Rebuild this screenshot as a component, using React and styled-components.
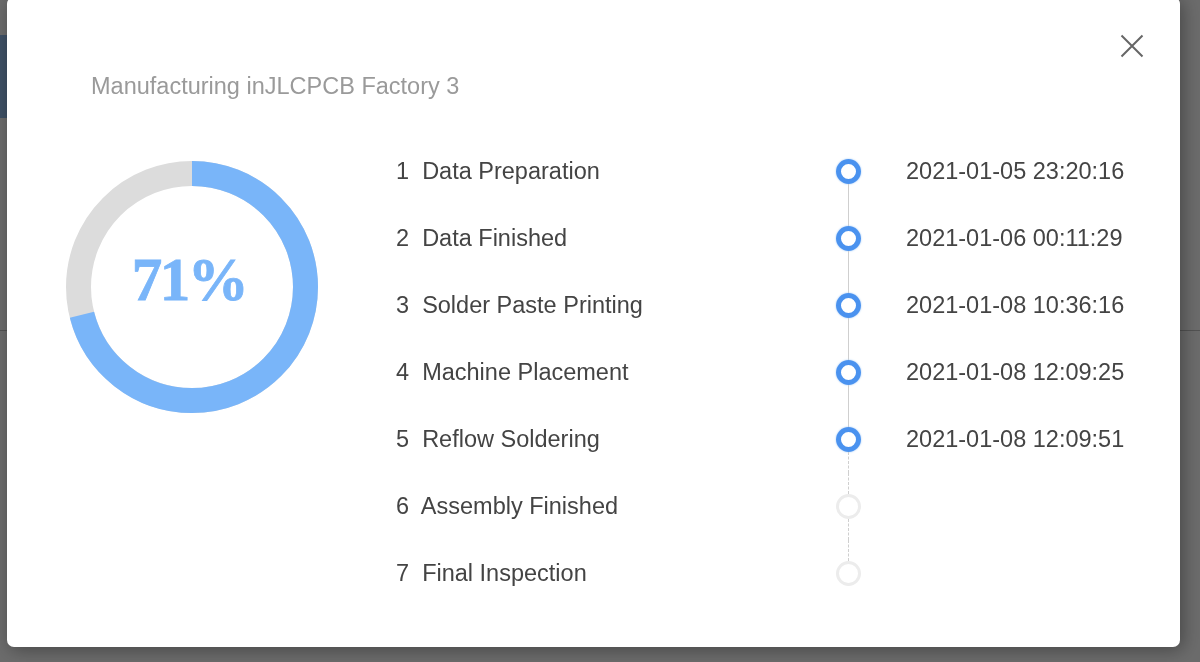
import styled, { createGlobalStyle } from "styled-components";

const GlobalStyle = createGlobalStyle`
  html, body {
    margin: 0;
    padding: 0;
    background: #ffffff;
    overflow: hidden;
    font-family: "Liberation Sans", Arial, sans-serif;
  }
`;

const Page = styled.div`
  width: 1200px;
  height: 662px;
  padding-top: 35px;
  box-sizing: border-box;
`;

const Banner = styled.div`
  width: 240px;
  height: 83px;
  background: #94bff0;
`;

const Rule = styled.div`
  margin-top: 212px;
  height: 1px;
  background: #c4c4c4;
`;

const Backdrop = styled.div`
  position: fixed;
  inset: 0;
  background: rgba(0, 0, 0, 0.58);
`;

const Modal = styled.div`
  position: fixed;
  left: 7px;
  top: -3px;
  width: 1173px;
  height: 650px;
  background: #ffffff;
  border-radius: 7px;
  box-shadow: 3px 3px 18px rgba(0, 0, 0, 0.35);
  box-sizing: border-box;
  padding: 77px 0 0 0;
`;

const Close = styled.button`
  position: absolute;
  top: 37px;
  right: 36px;
  width: 24px;
  height: 24px;
  padding: 0;
  border: none;
  background: none;
  cursor: pointer;
  color: #666;
`;

const Title = styled.h3`
  margin: 0 0 0 84px;
  font-size: 23.5px;
  line-height: 24px;
  font-weight: 400;
  color: #9a9a9a;
`;

const Body = styled.div`
  display: flex;
  margin-top: 40px;
  padding-left: 59px;
`;

const Donut = styled.div`
  display: grid;
  width: 252px;
  height: 252px;
  margin-top: 23px;
  margin-right: 78px;
  flex-shrink: 0;

  & > * {
    grid-area: 1 / 1;
  }
`;

const Percent = styled.div`
  align-self: center;
  justify-self: center;
  margin: -14px 6px 0 0;
  font-family: "Liberation Serif", "Times New Roman", serif;
  font-weight: 700;
  font-size: 61px;
  letter-spacing: -2.5px;
  color: #79b5f9;
  -webkit-text-stroke: 0.8px #79b5f9;
`;

const Steps = styled.ol`
  list-style: none;
  margin: 0;
  padding: 0;
`;

const Step = styled.li`
  display: grid;
  grid-template-columns: 440px 24px auto;
  height: 67px;
  align-items: center;
  font-size: 23.5px;
  color: #444;
`;

const Label = styled.span`
  white-space: pre;
`;

const Track = styled.div`
  display: flex;
  flex-direction: column;
  align-items: center;
  align-self: stretch;
`;

const Segment = styled.div`
  flex: 1;
  width: 0;
  border-left: 1px ${(p) => (p.$dashed ? "dashed" : "solid")}
    ${(p) => (p.$hidden ? "transparent" : "#cfcfcf")};
`;

const Dot = styled.div`
  width: 25px;
  height: 25px;
  box-sizing: border-box;
  border-radius: 50%;
  flex-shrink: 0;
  border: ${(p) => (p.$done ? "5px solid #4a92ef" : "3px solid #ececec")};
  box-shadow: ${(p) => (p.$done ? "0 0 2px #9cc6f6" : "none")};
`;

const Time = styled.span`
  padding-left: 46px;
  white-space: nowrap;
`;

const steps = [
  { name: "Data Preparation", time: "2021-01-05 23:20:16" },
  { name: "Data Finished", time: "2021-01-06 00:11:29" },
  { name: "Solder Paste Printing", time: "2021-01-08 10:36:16" },
  { name: "Machine Placement", time: "2021-01-08 12:09:25" },
  { name: "Reflow Soldering", time: "2021-01-08 12:09:51" },
  { name: "Assembly Finished" },
  { name: "Final Inspection" },
];

const R = 113.5;
const C = 2 * Math.PI * R;
const progress = 0.71;

const App = () => (
  <>
    <GlobalStyle />
    <Page>
      <Banner />
      <Rule />
    </Page>
    <Backdrop />
    <Modal>
      <Close aria-label="close">
        <svg width="24" height="24" viewBox="0 0 24 24">
          <path
            d="M1.5 1.5 L22.5 22.5 M22.5 1.5 L1.5 22.5"
            stroke="currentColor"
            strokeWidth="2"
            fill="none"
          />
        </svg>
      </Close>
      <Title>Manufacturing inJLCPCB Factory 3</Title>
      <Body>
        <Donut>
          <svg width="252" height="252" viewBox="0 0 252 252">
            <circle cx="126" cy="126" r={R} fill="none" stroke="#dcdcdc" strokeWidth="25" />
            <circle
              cx="126"
              cy="126"
              r={R}
              fill="none"
              stroke="#79b5f9"
              strokeWidth="25"
              strokeDasharray={`${C * progress} ${C}`}
              transform="rotate(-90 126 126)"
            />
          </svg>
          <Percent>71%</Percent>
        </Donut>
        <Steps>
          {steps.map((s, i) => {
            const prev = steps[i - 1];
            const next = steps[i + 1];
            return (
              <Step key={s.name}>
                <Label>{`${i + 1}  ${s.name}`}</Label>
                <Track>
                  <Segment $hidden={!prev} $dashed={!s.time} />
                  <Dot $done={!!s.time} />
                  <Segment $hidden={!next} $dashed={next && !next.time} />
                </Track>
                <Time>{s.time}</Time>
              </Step>
            );
          })}
        </Steps>
      </Body>
    </Modal>
  </>
);

export default App;
